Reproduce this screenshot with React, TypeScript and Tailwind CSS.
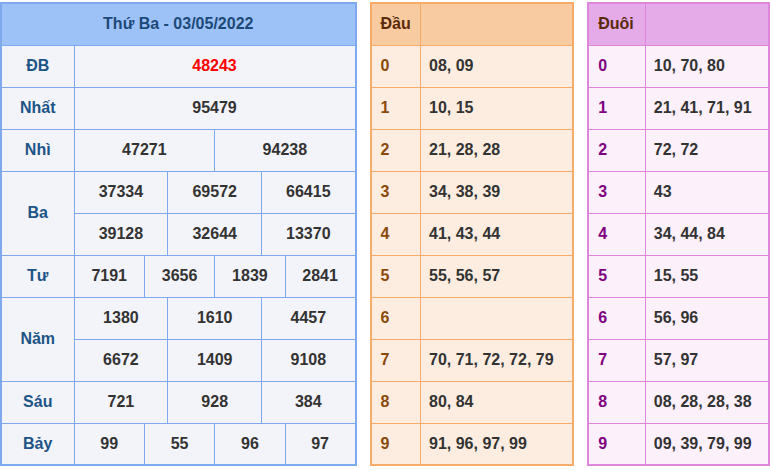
import React from "react";

const L = "border border-[#7ea9ef]";
const rows: [string, string[]][] = [
  ["Nhất", ["95479"]],
  ["Nhì", ["47271", "94238"]],
];
const span: Record<number, string> = { 1: "12", 2: "6", 3: "4", 4: "3" };

function NumRow({ label, vals, rowSpan, showLabel = true }: { label: string; vals: string[]; rowSpan?: number; showLabel?: boolean }) {
  return (
    <tr className="h-[42px]">
      {showLabel && (
        <td rowSpan={rowSpan} className={`${L} text-center font-bold text-[#1c5487]`}>{label}</td>
      )}
      {vals.map((v, i) => (
        <td key={i} colSpan={Number(span[vals.length])} className={`${L} text-center font-bold text-[#333]`}>{v}</td>
      ))}
    </tr>
  );
}

const dau = ["08, 09", "10, 15", "21, 28, 28", "34, 38, 39", "41, 43, 44", "55, 56, 57", "", "70, 71, 72, 72, 79", "80, 84", "91, 96, 97, 99"];
const duoi = ["10, 70, 80", "21, 41, 71, 91", "72, 72", "43", "34, 44, 84", "15, 55", "56, 96", "57, 97", "08, 28, 28, 38", "09, 39, 79, 99"];

function Side({ title, data, w, c1, hb, bb, bc, dc }: { title: string; data: string[]; w: string; c1: string; hb: string; bb: string; bc: string; dc: string }) {
  return (
    <table className={`${w} table-fixed border-collapse border-2 ${bc}`}>
      <colgroup><col className={c1} /><col /></colgroup>
      <tbody>
        <tr className={`h-[42px] ${hb}`}>
          <td className={`border ${bc} px-[9px] font-bold text-[#5a2a0a]`}>{title}</td>
          <td className={`border ${bc}`}></td>
        </tr>
        {data.map((d, i) => (
          <tr key={i} className={`h-[42px] ${bb}`}>
            <td className={`border ${bc} px-[9px] font-bold ${dc}`}>{i}</td>
            <td className={`border ${bc} px-[8px] font-bold text-[#333] whitespace-nowrap`}>{d}</td>
          </tr>
        ))}
      </tbody>
    </table>
  );
}

export default function App() {
  return (
    <div className="w-[770px] h-[470px] bg-white flex items-start gap-[13px] pt-[2px] text-[16px]" style={{ fontFamily: '"Liberation Sans", Arial, sans-serif' }}>
      <table className="w-[357px] table-fixed border-collapse border-2 border-[#7ea9ef] bg-[#f3f4f9]">
        <colgroup>
          <col className="w-[73px]" />
          {Array.from({ length: 12 }).map((_, i) => <col key={i} />)}
        </colgroup>
        <tbody>
          <tr className="h-[42px] bg-[#9dc2f8]">
            <td colSpan={13} className={`${L} text-center font-bold text-[#1c4a78]`}>Thứ Ba - 03/05/2022</td>
          </tr>
          <tr className="h-[42px]">
            <td className={`${L} text-center font-bold text-[#1c5487]`}>ĐB</td>
            <td colSpan={12} className={`${L} text-center font-bold text-[#ff0000]`}>48243</td>
          </tr>
          {rows.map(([l, v]) => <NumRow key={l} label={l} vals={v} />)}
          <NumRow label="Ba" vals={["37334", "69572", "66415"]} rowSpan={2} />
          <NumRow label="Ba" vals={["39128", "32644", "13370"]} showLabel={false} />
          <NumRow label="Tư" vals={["7191", "3656", "1839", "2841"]} />
          <NumRow label="Năm" vals={["1380", "1610", "4457"]} rowSpan={2} />
          <NumRow label="Năm" vals={["6672", "1409", "9108"]} showLabel={false} />
          <NumRow label="Sáu" vals={["721", "928", "384"]} />
          <NumRow label="Bảy" vals={["99", "55", "96", "97"]} />
        </tbody>
      </table>
      <Side title="Đầu" data={dau} w="w-[205px]" c1="w-[50px]" hb="bg-[#f9cba0]" bb="bg-[#fdede0]" bc="border-[#f5ac6a]" dc="text-[#8b4a0a]" />
      <Side title="Đuôi" data={duoi} w="w-[183px]" c1="w-[57px]" hb="bg-[#e4abe8]" bb="bg-[#fcf0fa]" bc="border-[#de86dc]" dc="text-[#800080]" />
    </div>
  );
}
